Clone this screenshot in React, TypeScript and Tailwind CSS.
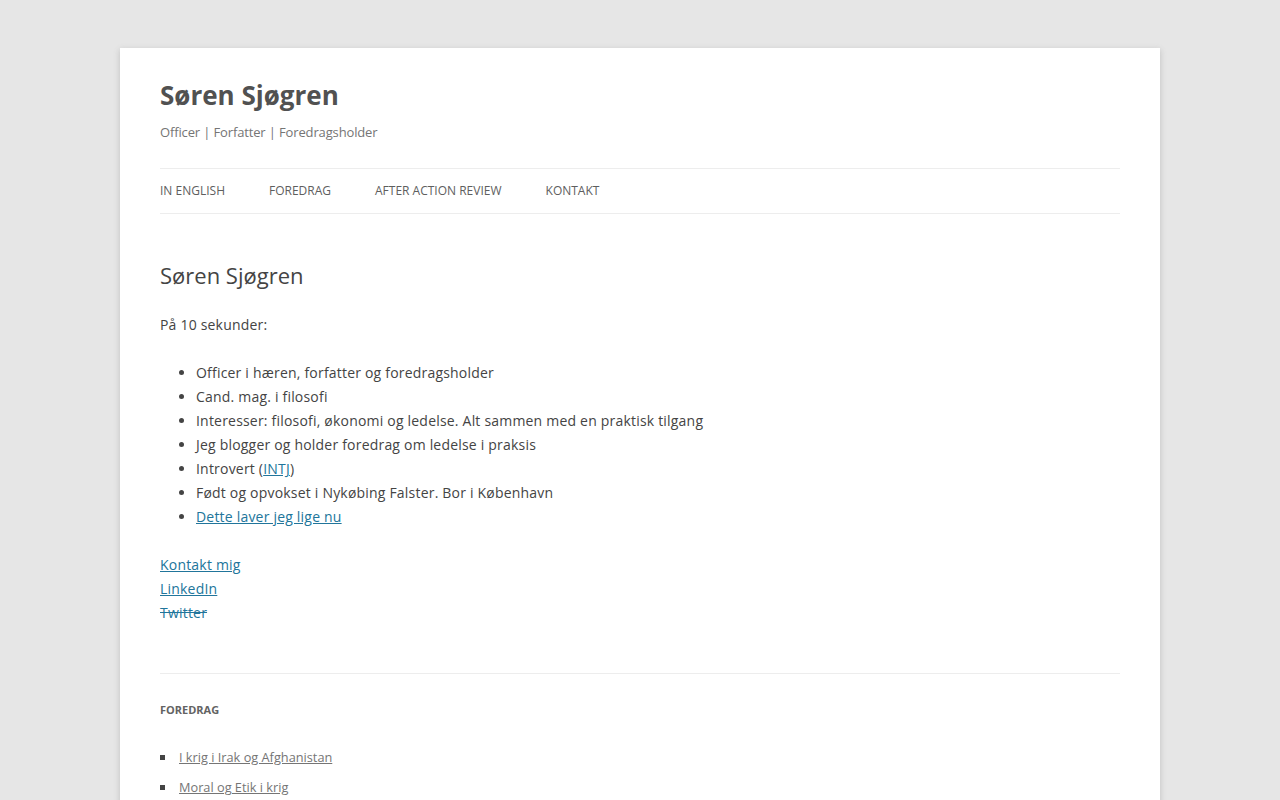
import React from "react";

const navItems = ["In English", "Foredrag", "After Action Review", "Kontakt"];

const bullets: React.ReactNode[] = [
  "Officer i hæren, forfatter og foredragsholder",
  "Cand. mag. i filosofi",
  "Interesser: filosofi, økonomi og ledelse. Alt sammen med en praktisk tilgang",
  "Jeg blogger og holder foredrag om ledelse i praksis",
  <>
    Introvert (<a href="#" className="text-[#21759b] underline">INTJ</a>)
  </>,
  "Født og opvokset i Nykøbing Falster. Bor i København",
  <a href="#" className="text-[#21759b] underline">Dette laver jeg lige nu</a>,
];

const widgetItems = ["I krig i Irak og Afghanistan", "Moral og Etik i krig"];

export default function App() {
  return (
    <div
      className="min-h-screen bg-[#e6e6e6] pt-12 pb-12"
      style={{ fontFamily: '"Open Sans", "Liberation Sans", sans-serif' }}
    >
      <div className="mx-auto w-[1040px] bg-white px-10 shadow-[0_2px_6px_rgba(100,100,100,0.3)]">
        <header className="pt-[32px]">
          <h1 className="text-[26px] leading-[31px] font-bold text-[#515151]">Søren Sjøgren</h1>
          <h2 className="mt-[9px] text-[13px] leading-[24px] tracking-[-0.14px] text-[#757575]">
            Officer | Forfatter | Foredragsholder
          </h2>
          <nav className="mt-[24px] border-y border-[#ededed]">
            <ul className="flex h-[44px] items-center gap-[44px]">
              {navItems.map((n) => (
                <li key={n} className="text-[12px] uppercase text-[#5e5e5e]">
                  {n}
                </li>
              ))}
            </ul>
          </nav>
        </header>

        <main className="pt-[49px] text-[14px] leading-[24px] tracking-[0.2px] text-[#444]">
          <h1 className="text-[22px] leading-[24px] font-normal tracking-normal text-[#444]">Søren Sjøgren</h1>
          <p className="mt-[26px] mb-[24px]">På 10 sekunder:</p>
          <ul className="mb-[24px] list-disc pl-[36px]">
            {bullets.map((b, i) => (
              <li key={i}>{b}</li>
            ))}
          </ul>
          <p>
            <a href="#" className="text-[#21759b] underline">Kontakt mig</a>
            <br />
            <a href="#" className="text-[#21759b] underline">LinkedIn</a>
            <br />
            <a href="#" className="text-[#21759b] line-through decoration-[#21759b]">Twitter</a>
          </p>
        </main>

        <aside className="mt-[48px] border-t border-[#ededed] pt-[24px] pb-6">
          <h3 className="text-[11px] leading-[24px] font-bold uppercase text-[#636363]">Foredrag</h3>
          <ul className="mt-[23px]">
            {widgetItems.map((w) => (
              <li key={w} className="mb-[6px] flex items-center text-[12.75px] leading-[24px]">
                <span className="mr-[14px] inline-block h-[5px] w-[5px] bg-[#444]" />
                <a href="#" className="text-[#757575] underline">{w}</a>
              </li>
            ))}
          </ul>
        </aside>
      </div>
    </div>
  );
}
